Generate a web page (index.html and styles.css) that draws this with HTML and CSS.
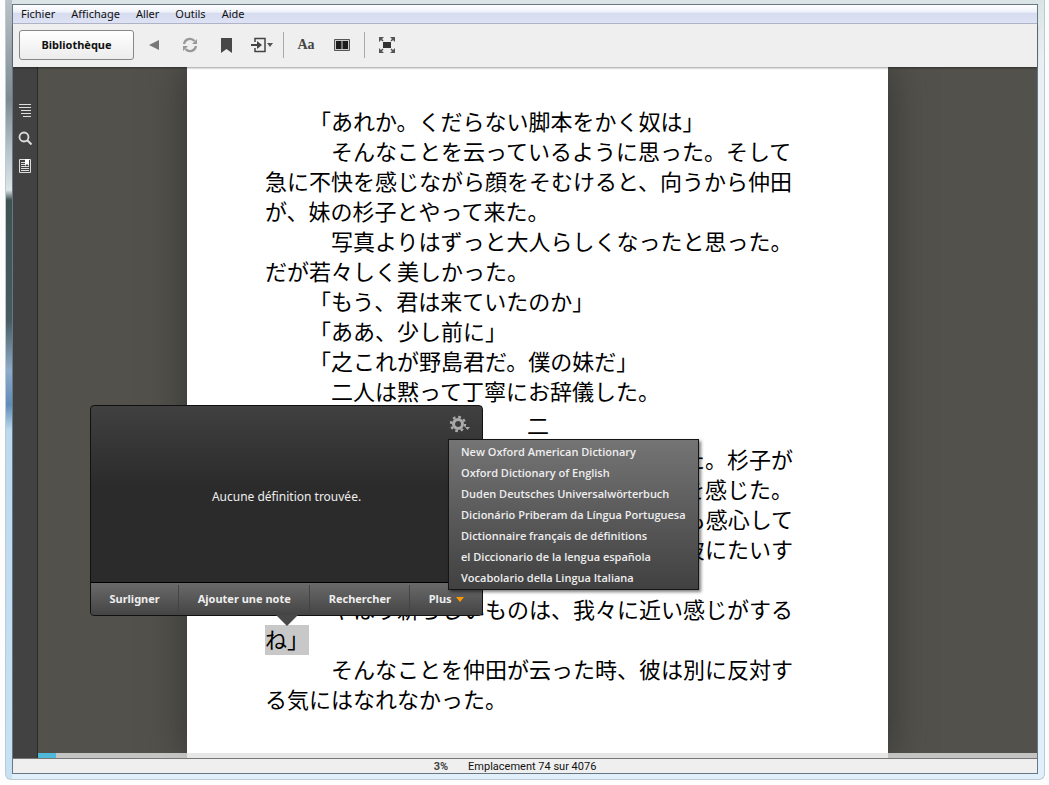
FILE: index.html
```
<!DOCTYPE html>
<html lang="fr">
<head>
  <meta charset="UTF-8">
  <meta name="viewport" content="width=device-width, initial-scale=1.0">
  <title>Kindle pour PC</title>
  <link rel="stylesheet" href="styles.css">
</head>
<body>
  <div class="frame">
    <div class="window">
      <nav class="menubar">
        <button>Fichier</button>
        <button>Affichage</button>
        <button>Aller</button>
        <button>Outils</button>
        <button>Aide</button>
      </nav>

      <header class="toolbar">
        <button class="library">Bibliothèque</button>
        <button class="tool" aria-label="Retour">
          <svg width="18" height="18" viewBox="0 0 18 18"><path d="M4 9l10-5v10z" fill="#777"/></svg>
        </button>
        <button class="tool" aria-label="Synchroniser">
          <svg width="18" height="18" viewBox="0 0 18 18"><g fill="none" stroke="#999" stroke-width="2.200"><path d="M3 8a6 6 0 0 1 10.500-3"/><path d="M15 10a6 6 0 0 1-10.500 3"/></g><path d="M16 3v5h-5zM2 15v-5h5z" fill="#999"/></svg>
        </button>
        <button class="tool" aria-label="Signet">
          <svg width="18" height="18" viewBox="0 0 18 18"><path d="M4 2h11v15l-5.500-4L4 17z" fill="#484848"/></svg>
        </button>
        <button class="tool" aria-label="Aller à">
          <svg width="24" height="18" viewBox="0 0 24 18"><path d="M5 6V2.500h10v13H5V12" fill="none" stroke="#444" stroke-width="1.500"/><path d="M1 8h6V5l5 4-5 4v-3H1z" fill="#444"/><path d="M17 7h6l-3 4z" fill="#555"/></svg>
        </button>
        <span class="separator first"></span>
        <button class="tool letters" aria-label="Police">Aa</button>
        <button class="tool" aria-label="Colonnes">
          <svg width="18" height="18" viewBox="0 0 18 18"><path d="M1.500 3.500h15v11h-15z" fill="#ccc" stroke="#555"/><path d="M3 5h5.500v8H3zM9.500 5H15v8H9.500z" fill="#1c1c1c"/></svg>
        </button>
        <span class="separator"></span>
        <button class="tool" aria-label="Plein écran">
          <svg width="18" height="18" viewBox="0 0 18 18"><path d="M5 6h8v6H5z" fill="#333"/><path d="M1 1h5L1 6zM17 1v5l-5-5zM1 17v-5l5 5zM17 17h-5l5-5z" fill="#555"/><path d="M2 2l3 3M16 2l-3 3M2 16l3-3M16 16l-3-3" stroke="#555" stroke-width="1.500"/></svg>
        </button>
      </header>

      <div class="main">
        <aside class="sidebar">
          <button aria-label="Table des matières">
            <svg width="14" height="14" viewBox="0 0 14 14"><path d="M1 1.500h12M1 4.500h12M3 7.500h10M3 10.500h10M5 13.500h8" stroke="#ddd"/></svg>
          </button>
          <button aria-label="Rechercher dans le livre">
            <svg width="14" height="14" viewBox="0 0 14 14"><circle cx="6" cy="6" r="4.500" fill="none" stroke="#ddd" stroke-width="1.800"/><path d="M9 9l4.500 4.500" stroke="#ddd" stroke-width="2"/></svg>
          </button>
          <button aria-label="Notes">
            <svg width="14" height="14" viewBox="0 0 14 14"><path d="M1.500 .500h11v13h-11z" fill="none" stroke="#ddd"/><path d="M3 3.500h5M3 5.500h5M3 7.500h8M3 9.500h8M3 11.500h8" stroke="#ddd"/><path d="M7 0h4v7L9 5 7 7z" fill="#fff"/></svg>
          </button>
        </aside>

        <div class="reader">
          <article class="page" lang="ja">
            <p class="speech">「あれか。くだらない脚本をかく奴は」</p>
            <p>そんなことを云っているように思った。そして<br>急に不快を感じながら顔をそむけると、向うから仲田<br>が、妹の杉子とやって来た。</p>
            <p>写真よりはずっと大人らしくなったと思った。<br>だが若々しく美しかった。</p>
            <p class="speech">「もう、君は来ていたのか」</p>
            <p class="speech">「ああ、少し前に」</p>
            <p class="speech">「之これが野島君だ。僕の妹だ」</p>
            <p>二人は黙って丁寧にお辞儀した。</p>
            <h2>二</h2>
            <p class="rest">た。杉子が<br>を感じた。<br>も感心して<br>彼にたいす</p>
            <p class="speech gap">「やはり新らしいものは、我々に近い感じがする<br><mark>ね」</mark></p>
            <p>そんなことを仲田が云った時、彼は別に反対す<br>る気にはなれなかった。</p>
          </article>

          <section class="popup">
            <button class="gear" aria-label="Dictionnaires">
              <svg width="20" height="18" viewBox="0 0 20 18"><circle cx="8" cy="9" r="4.500" fill="none" stroke="#aaa" stroke-width="3"/><circle cx="8" cy="9" r="7" fill="none" stroke="#aaa" stroke-width="2.400" stroke-dasharray="2.700 2.800"/><path d="M15 12h5l-2.500 3z" fill="#aaa"/></svg>
            </button>
            <div class="definition">Aucune définition trouvée.</div>
            <div class="actions">
              <button>Surligner</button>
              <button>Ajouter une note</button>
              <button>Rechercher</button>
              <button>Plus<span class="more"></span></button>
            </div>
            <ul class="dictionaries">
              <li><button>New Oxford American Dictionary</button></li>
              <li><button>Oxford Dictionary of English</button></li>
              <li><button>Duden Deutsches Universalwörterbuch</button></li>
              <li><button>Dicionário Priberam da Língua Portuguesa</button></li>
              <li><button>Dictionnaire français de définitions</button></li>
              <li><button>el Diccionario de la lengua española</button></li>
              <li><button>Vocabolario della Lingua Italiana</button></li>
            </ul>
          </section>

          <div class="progress"><div class="done"></div></div>
        </div>
      </div>

      <footer class="status">
        <span class="percent">3%</span>
        <span>Emplacement 74 sur 4076</span>
      </footer>
    </div>
  </div>
</body>
</html>
```
FILE: styles.css
```
* {
  box-sizing: border-box;
}
body {
  margin: 0;
  padding: 0 4px 5px 5px;
  height: 100vh;
  background-color: #fdfdfd;
  font-family: "Noto Sans", "Open Sans", sans-serif;
  font-size: 11px;
  color: #111;
}
button {
  font: inherit;
  color: inherit;
  background: none;
  border: none;
  padding: 0;
  cursor: pointer;
}
svg {
  display: block;
}
.frame {
  height: 100%;
  padding: 4px 6px 5px 6px;
  border: 1px solid #bccbd2;
  border-top: none;
  border-radius: 0 0 6px 6px;
  background:
    linear-gradient(#b9c2c6, #7d8a92 100px, #b5c3ca 150px, #dde5e8 190px, #3f5253 200px, #465b60 320px, #8fabc9 370px, #5f8cb8 405px, #bcd9ee 430px, #c8e2f4) left / 6px 100% no-repeat,
    linear-gradient(#dbe4e4, #e8f0f4 60px, #e0effa);
}
.window {
  height: 100%;
  display: flex;
  flex-direction: column;
  border: 1px solid #667785;
  background-color: #efefef;
}
.menubar {
  display: flex;
  gap: 16px;
  height: 19px;
  padding: 0 8px 2px;
  border-bottom: 1px solid #b5b9cc;
  background: linear-gradient(#fff, #edf1f9 40%, #d6dcef 45%, #dde2f4);
}
.toolbar {
  display: flex;
  align-items: center;
  height: 43px;
  padding: 0 6px 2px;
  background-color: #efefef;
  box-shadow: 0 1px 2px rgba(0, 0, 0, 0.4);
  z-index: 1;
}
.library {
  width: 115px;
  height: 30px;
  margin-right: 2px;
  border: 1px solid #888;
  border-radius: 3px;
  background: linear-gradient(#fff, #ececec);
  font-weight: bold;
}
.tool {
  display: flex;
  justify-content: center;
  align-items: center;
  width: 36px;
  height: 30px;
}
.letters {
  font-family: "Liberation Serif", serif;
  font-size: 14px;
  font-weight: bold;
  color: #444;
}
.separator {
  width: 1px;
  height: 26px;
  margin: 0 4px;
  background-color: #aaa;
}
.first {
  margin-left: 3px;
}
.main {
  flex: 1;
  display: flex;
  min-height: 0;
}
.sidebar {
  display: flex;
  flex-direction: column;
  align-items: center;
  gap: 14px;
  width: 25px;
  padding-top: 36px;
  border-right: 1px solid #2c2b28;
  background-color: #424242;
}
.reader {
  position: relative;
  flex: 1;
  padding: 0 149px;
  overflow: hidden;
  background-color: #52514b;
}
.page {
  height: 100%;
  padding: 38px 77px 0 78px;
  background-color: #fff;
  box-shadow: 0 0 36px #333;
  font-family: "Noto Sans CJK JP", sans-serif;
  font-size: 22px;
  line-height: 30px;
  color: #000;
  white-space: nowrap;
}
.page p {
  width: 24em;
  margin: 0;
  text-indent: 3em;
}
.page .speech {
  text-indent: 2em;
}
.page .rest {
  text-indent: 0;
  text-align: right;
}
.page .gap {
  margin-top: 30px;
}
.page h2 {
  margin: 4px 0;
  font-size: 22px;
  font-weight: normal;
  text-align: center;
}
mark {
  display: inline-block;
  margin-bottom: -4px;
  padding-bottom: 4px;
  background-color: #c8c8c8;
  line-height: 26px;
  text-indent: 0;
}
.popup {
  position: absolute;
  left: 52px;
  top: 338px;
  width: 393px;
  border: 1px solid #111;
  border-radius: 4px;
  background: linear-gradient(#404040, #2b2b2b 80px);
  color: #eee;
}
.popup::after {
  content: "";
  position: absolute;
  left: 50%;
  top: 100%;
  margin-left: -11px;
  border: 11px solid transparent;
  border-top-color: #484848;
  border-bottom: none;
}
.definition {
  display: flex;
  justify-content: center;
  align-items: center;
  height: 176px;
  padding-top: 4px;
  font-size: 12px;
}
.gear {
  position: absolute;
  top: 9px;
  right: 12px;
}
.actions {
  display: flex;
  height: 33px;
  padding: 2px 0 4px;
  border-top: 1px solid #000;
  border-radius: 0 0 3px 3px;
  background: linear-gradient(#6a6a6a, #444);
  font-weight: bold;
  text-shadow: 0 1px 1px #222;
}
.actions button {
  flex: auto;
  border-left: 1px solid #444;
}
.actions button:first-child {
  border-left: none;
}
.more {
  display: inline-block;
  margin-left: 4px;
  border: 4px solid transparent;
  border-top: 5px solid #f90;
  border-bottom: none;
  vertical-align: 1px;
}
.dictionaries {
  position: absolute;
  left: 357px;
  top: 33px;
  margin: 0;
  padding: 1px 12px;
  list-style: none;
  border: 1px solid #151515;
  background: linear-gradient(#747474, #414141);
  box-shadow: 2px 2px 3px rgba(0, 0, 0, 0.5);
  font-family: "Open Sans", sans-serif;
  font-weight: 600;
  white-space: nowrap;
}
.dictionaries li {
  height: 21px;
}
.dictionaries button {
  display: block;
  height: 21px;
}
.progress {
  position: absolute;
  left: 0;
  right: 0;
  bottom: 0;
  height: 5px;
  background-color: rgba(225, 225, 225, 0.8);
}
.done {
  width: 18px;
  height: 5px;
  background-color: #50b8d8;
}
.status {
  display: flex;
  align-items: center;
  justify-content: center;
  gap: 20px;
  height: 15px;
  padding-right: 20px;
  border-top: 1px solid #777;
  font-family: Roboto, sans-serif;
}
.percent {
  font-weight: bold;
  color: #444;
}
```
